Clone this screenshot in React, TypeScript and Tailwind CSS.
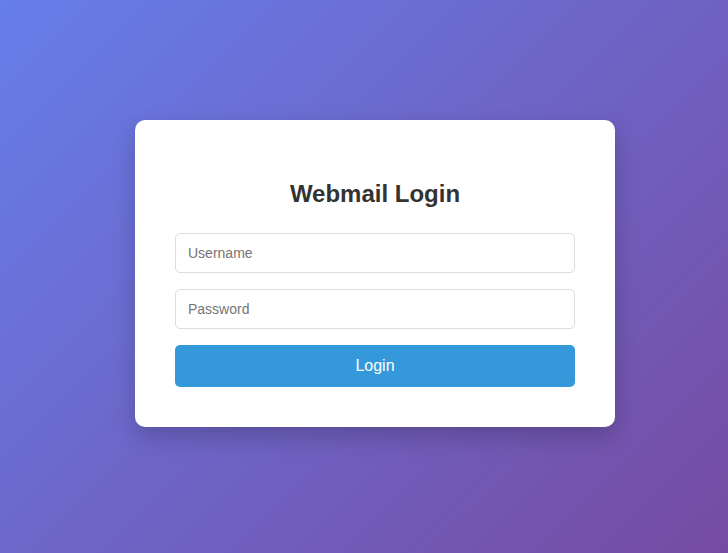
const App = () => {
  return (
    <div
      className="min-h-screen w-full flex items-center justify-center pl-[22px] pb-[6px] bg-[linear-gradient(135deg,#667eea_0%,#764ba2_100%)]"
      style={{ fontFamily: '"Liberation Sans", Arial, sans-serif' }}
    >
      <div className="w-[480px] bg-white rounded-[10px] px-10 pt-[60px] pb-10 shadow-[0_10px_25px_rgba(0,0,0,0.2)]">
        <h2 className="text-center text-[24px] leading-[27px] font-bold text-[#333] mb-[26px]">Webmail Login</h2>
        <form className="flex flex-col gap-4" onSubmit={(e) => e.preventDefault()}>
          <input
            type="text"
            placeholder="Username"
            className="h-10 w-full px-3 text-sm border border-[#ddd] rounded-[5px] placeholder:text-[#757575] outline-none"
          />
          <input
            type="password"
            placeholder="Password"
            className="h-10 w-full px-3 text-sm border border-[#ddd] rounded-[5px] placeholder:text-[#757575] outline-none"
          />
          <button
            type="submit"
            className="h-[42px] w-full bg-[#3498db] text-white text-base rounded-[5px]"
          >
            Login
          </button>
        </form>
      </div>
    </div>
  );
};

export default App;
